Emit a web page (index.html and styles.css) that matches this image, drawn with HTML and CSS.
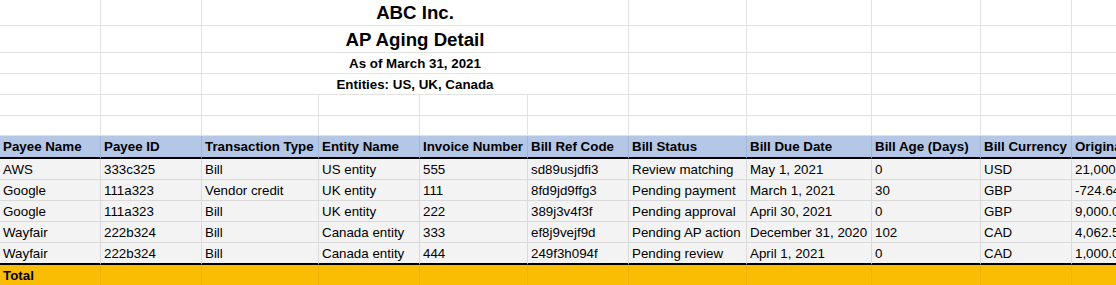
FILE: index.html
```html
<!DOCTYPE html>
<html lang="en">
<head>
<meta charset="utf-8">
<title>AP Aging Detail</title>
<link rel="stylesheet" href="styles.css">
</head>
<body>
<div class="sheet">
  <div class="row r-t1">
    <div class="cell"></div><div class="cell"></div>
    <div class="cell merged title-big">ABC Inc.</div>
    <div class="cell"></div><div class="cell"></div><div class="cell"></div><div class="cell"></div><div class="cell"></div>
  </div>
  <div class="row r-t2">
    <div class="cell"></div><div class="cell"></div>
    <div class="cell merged title-big title-ap">AP Aging Detail</div>
    <div class="cell"></div><div class="cell"></div><div class="cell"></div><div class="cell"></div><div class="cell"></div>
  </div>
  <div class="row r-std">
    <div class="cell"></div><div class="cell"></div>
    <div class="cell merged title-sub">As of March 31, 2021</div>
    <div class="cell"></div><div class="cell"></div><div class="cell"></div><div class="cell"></div><div class="cell"></div>
  </div>
  <div class="row r-std">
    <div class="cell"></div><div class="cell"></div>
    <div class="cell merged title-sub">Entities: US, UK, Canada</div>
    <div class="cell"></div><div class="cell"></div><div class="cell"></div><div class="cell"></div><div class="cell"></div>
  </div>
  <div class="row r-std">
    <div class="cell"></div><div class="cell"></div><div class="cell"></div><div class="cell"></div><div class="cell"></div><div class="cell"></div><div class="cell"></div><div class="cell"></div><div class="cell"></div><div class="cell"></div><div class="cell"></div>
  </div>
  <div class="row r-short">
    <div class="cell"></div><div class="cell"></div><div class="cell"></div><div class="cell"></div><div class="cell"></div><div class="cell"></div><div class="cell"></div><div class="cell"></div><div class="cell"></div><div class="cell"></div><div class="cell"></div>
  </div>
  <div class="row r-head">
    <div class="cell">Payee Name</div>
    <div class="cell">Payee ID</div>
    <div class="cell">Transaction Type</div>
    <div class="cell">Entity Name</div>
    <div class="cell">Invoice Number</div>
    <div class="cell">Bill Ref Code</div>
    <div class="cell">Bill Status</div>
    <div class="cell">Bill Due Date</div>
    <div class="cell">Bill Age (Days)</div>
    <div class="cell">Bill Currency</div>
    <div class="cell">Original Amount</div>
  </div>
  <div class="row r-data">
    <div class="cell">AWS</div>
    <div class="cell">333c325</div>
    <div class="cell">Bill</div>
    <div class="cell">US entity</div>
    <div class="cell">555</div>
    <div class="cell">sd89usjdfi3</div>
    <div class="cell">Review matching</div>
    <div class="cell">May 1, 2021</div>
    <div class="cell">0</div>
    <div class="cell">USD</div>
    <div class="cell">21,000.00</div>
  </div>
  <div class="row r-data">
    <div class="cell">Google</div>
    <div class="cell">111a323</div>
    <div class="cell">Vendor credit</div>
    <div class="cell">UK entity</div>
    <div class="cell">111</div>
    <div class="cell">8fd9jd9ffg3</div>
    <div class="cell">Pending payment</div>
    <div class="cell">March 1, 2021</div>
    <div class="cell">30</div>
    <div class="cell">GBP</div>
    <div class="cell">-724.64</div>
  </div>
  <div class="row r-data">
    <div class="cell">Google</div>
    <div class="cell">111a323</div>
    <div class="cell">Bill</div>
    <div class="cell">UK entity</div>
    <div class="cell">222</div>
    <div class="cell">389j3v4f3f</div>
    <div class="cell">Pending approval</div>
    <div class="cell">April 30, 2021</div>
    <div class="cell">0</div>
    <div class="cell">GBP</div>
    <div class="cell">9,000.00</div>
  </div>
  <div class="row r-data">
    <div class="cell">Wayfair</div>
    <div class="cell">222b324</div>
    <div class="cell">Bill</div>
    <div class="cell">Canada entity</div>
    <div class="cell">333</div>
    <div class="cell">ef8j9vejf9d</div>
    <div class="cell">Pending AP action</div>
    <div class="cell">December 31, 2020</div>
    <div class="cell">102</div>
    <div class="cell">CAD</div>
    <div class="cell">4,062.50</div>
  </div>
  <div class="row r-data r-data-last">
    <div class="cell">Wayfair</div>
    <div class="cell">222b324</div>
    <div class="cell">Bill</div>
    <div class="cell">Canada entity</div>
    <div class="cell">444</div>
    <div class="cell">249f3h094f</div>
    <div class="cell">Pending review</div>
    <div class="cell">April 1, 2021</div>
    <div class="cell">0</div>
    <div class="cell">CAD</div>
    <div class="cell">1,000.00</div>
  </div>
  <div class="row r-total">
    <div class="cell">Total</div>
    <div class="cell"></div><div class="cell"></div><div class="cell"></div><div class="cell"></div><div class="cell"></div><div class="cell"></div><div class="cell"></div><div class="cell"></div><div class="cell"></div><div class="cell"></div>
  </div>
</div>
</body>
</html>
```

FILE: styles.css
```css
html, body {
  margin: 0;
  padding: 0;
  overflow: hidden;
  background: #ffffff;
}

body {
  font-family: "Liberation Sans", Arial, sans-serif;
  font-size: 13.33px;
  color: #000000;
}

.sheet {
  width: 1200px;
  display: flex;
  flex-direction: column;
}

.row {
  display: grid;
  grid-template-columns: 101px 101px 117px 101px 108px 101px 118px 125px 109px 91px 138px;
}

.cell {
  box-sizing: border-box;
  border-right: 1px solid #e2e2e2;
  border-bottom: 1px solid #e2e2e2;
  padding: 0 3px;
  white-space: nowrap;
  overflow: visible;
  display: flex;
  align-items: center;
  min-width: 0;
}

.merged {
  grid-column: span 4;
  justify-content: center;
  font-weight: bold;
}

.title-big {
  font-size: 18.67px;
}

.title-ap {
  padding-top: 2px;
}

.title-sub {
  font-size: 13.33px;
}

.r-t1 { height: 26px; }
.r-t2 { height: 27px; }
.r-std { height: 21px; }
.r-short { height: 20px; }

.r-head {
  height: 23px;
  background: #b4c7e7;
  font-weight: bold;
}

.r-head .cell {
  border-right-color: #a3b6d8;
  border-bottom: 2px solid #000000;
}

.r-data {
  height: 21px;
  background: #f3f3f3;
}

.r-data .cell {
  border-right-color: #dadada;
  border-bottom-color: #dadada;
}

.r-data-last {
  height: 22px;
}

.r-data-last .cell {
  border-bottom: 2px solid #000000;
}

.r-total {
  height: 21px;
  background: #fbbc04;
  font-weight: bold;
}

.r-total .cell {
  border-right-color: #efb204;
  border-bottom-color: #efb204;
}
```
